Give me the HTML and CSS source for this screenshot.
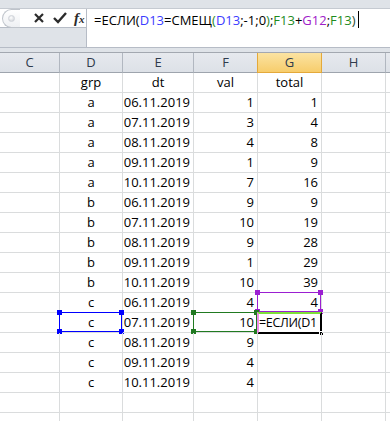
FILE: index.html
```html
<!DOCTYPE html>
<html lang="ru">
<head>
    <meta charset="UTF-8">
    <meta name="viewport" content="width=device-width, initial-scale=1.0">
    <title>Книга1 - Excel</title>
    <link rel="stylesheet" href="styles.css">
</head>
<body>
    <div class="window">
        <div class="top-strip"></div>

        <!-- Formula bar -->
        <div class="formula-bar">
            <div class="fx-panel">
                <div class="fx-tools">
                    <span class="grip"><span class="grip-dot"></span></span>
                    <svg class="tool-icon" width="14" height="14" viewBox="0 0 14 14">
                        <path d="M3 3 L11 11 M11 3 L3 11" stroke="#2b2b2b" stroke-width="2.2" fill="none"/>
                    </svg>
                    <svg class="tool-icon" width="16" height="14" viewBox="0 0 16 14">
                        <path d="M2 7 L6 11 L14 2" stroke="#2b2b2b" stroke-width="2.4" fill="none"/>
                    </svg>
                    <span class="fx-label">f<span class="fx-x">x</span></span>
                </div>
                <div class="fx-below"></div>
            </div>
            <div class="formula-input">
                <span>=ЕСЛИ(</span><span class="c-blue">D13</span><span>=СМЕЩ</span><span class="c-paren">(</span><span class="c-blue">D13</span><span>;-1;0</span><span class="c-paren">)</span><span>;</span><span class="c-green">F13</span><span>+</span><span class="c-purple">G12</span><span>;</span><span class="c-green">F13</span><span class="c-last">)</span><span class="caret"></span>
            </div>
        </div>

        <!-- Sheet -->
        <div class="sheet">
            <div class="row head-row">
                <div class="cell head">C</div>
                <div class="cell head">D</div>
                <div class="cell head">E</div>
                <div class="cell head">F</div>
                <div class="cell head head-active">G</div>
                <div class="cell head">H</div>
                <div class="cell head"></div>
            </div>

            <div class="row">
                <div class="cell"></div>
                <div class="cell center">grp</div>
                <div class="cell center">dt</div>
                <div class="cell center">val</div>
                <div class="cell center">total</div>
                <div class="cell"></div>
                <div class="cell"></div>
            </div>

            <div class="row"><div class="cell"></div><div class="cell center">a</div><div class="cell num">06.11.2019</div><div class="cell num">1</div><div class="cell num">1</div><div class="cell"></div><div class="cell"></div></div>
            <div class="row"><div class="cell"></div><div class="cell center">a</div><div class="cell num">07.11.2019</div><div class="cell num">3</div><div class="cell num">4</div><div class="cell"></div><div class="cell"></div></div>
            <div class="row"><div class="cell"></div><div class="cell center">a</div><div class="cell num">08.11.2019</div><div class="cell num">4</div><div class="cell num">8</div><div class="cell"></div><div class="cell"></div></div>
            <div class="row"><div class="cell"></div><div class="cell center">a</div><div class="cell num">09.11.2019</div><div class="cell num">1</div><div class="cell num">9</div><div class="cell"></div><div class="cell"></div></div>
            <div class="row"><div class="cell"></div><div class="cell center">a</div><div class="cell num">10.11.2019</div><div class="cell num">7</div><div class="cell num">16</div><div class="cell"></div><div class="cell"></div></div>
            <div class="row"><div class="cell"></div><div class="cell center">b</div><div class="cell num">06.11.2019</div><div class="cell num">9</div><div class="cell num">9</div><div class="cell"></div><div class="cell"></div></div>
            <div class="row"><div class="cell"></div><div class="cell center">b</div><div class="cell num">07.11.2019</div><div class="cell num">10</div><div class="cell num">19</div><div class="cell"></div><div class="cell"></div></div>
            <div class="row"><div class="cell"></div><div class="cell center">b</div><div class="cell num">08.11.2019</div><div class="cell num">9</div><div class="cell num">28</div><div class="cell"></div><div class="cell"></div></div>
            <div class="row"><div class="cell"></div><div class="cell center">b</div><div class="cell num">09.11.2019</div><div class="cell num">1</div><div class="cell num">29</div><div class="cell"></div><div class="cell"></div></div>
            <div class="row"><div class="cell"></div><div class="cell center">b</div><div class="cell num">10.11.2019</div><div class="cell num">10</div><div class="cell num">39</div><div class="cell"></div><div class="cell"></div></div>
            <div class="row">
                <div class="cell"></div>
                <div class="cell center">c</div>
                <div class="cell num">06.11.2019</div>
                <div class="cell num">4</div>
                <div class="cell num">4
                    <span class="range range-purple"><i class="h tl"></i><i class="h tr"></i><i class="h bl"></i><i class="h br"></i></span>
                </div>
                <div class="cell"></div>
                <div class="cell"></div>
            </div>
            <div class="row">
                <div class="cell"></div>
                <div class="cell center">c
                    <span class="range range-blue"><i class="h tl"></i><i class="h tr"></i><i class="h bl"></i><i class="h br"></i></span>
                </div>
                <div class="cell num">07.11.2019</div>
                <div class="cell num">10
                    <span class="range range-green"><i class="h tl"></i><i class="h tr"></i><i class="h bl"></i><i class="h br"></i></span>
                </div>
                <div class="cell editing">
                    <span class="edit-text">=ЕСЛИ(D1</span>
                    <span class="active-box"><i class="fill-handle"></i></span>
                </div>
                <div class="cell"></div>
                <div class="cell"></div>
            </div>
            <div class="row"><div class="cell"></div><div class="cell center">c</div><div class="cell num">08.11.2019</div><div class="cell num">9</div><div class="cell"></div><div class="cell"></div><div class="cell"></div></div>
            <div class="row"><div class="cell"></div><div class="cell center">c</div><div class="cell num">09.11.2019</div><div class="cell num">4</div><div class="cell"></div><div class="cell"></div><div class="cell"></div></div>
            <div class="row"><div class="cell"></div><div class="cell center">c</div><div class="cell num">10.11.2019</div><div class="cell num">4</div><div class="cell"></div><div class="cell"></div><div class="cell"></div></div>
            <div class="row"><div class="cell"></div><div class="cell"></div><div class="cell"></div><div class="cell"></div><div class="cell"></div><div class="cell"></div><div class="cell"></div></div>
            <div class="row"><div class="cell"></div><div class="cell"></div><div class="cell"></div><div class="cell"></div><div class="cell"></div><div class="cell"></div><div class="cell"></div></div>
        </div>
    </div>
</body>
</html>
```

FILE: styles.css
```css
/* Reset */
*
{
    margin: 0;
    padding: 0;
    box-sizing: border-box;
}

body
{
    width: 390px;
    height: 421px;
    overflow: hidden;
    background-color: #ffffff;
    font-family: "Open Sans", "Noto Sans", Arial, sans-serif;
    color: #000;
}

.window
{
    display: flex;
    flex-direction: column;
    height: 421px;
    background-color: #dfe3e8;
}

.top-strip
{
    height: 9px;
    background-color: #dfe3e8;
    border-bottom: 1px solid #c5cad1;
}

/* Formula bar */
.formula-bar
{
    display: flex;
    height: 39px;
    border-bottom: 1px solid #b6bcc6;
}

.fx-panel
{
    width: 86px;
    display: flex;
    flex-direction: column;
}

.fx-tools
{
    height: 19px;
    display: flex;
    align-items: center;
    gap: 6px;
    background-color: #ffffff;
    border-bottom: 1px solid #b6bcc6;
}

.grip
{
    width: 18px;
    height: 19px;
    border: 1px solid #bfc4cb;
    border-right: none;
    border-radius: 10px 0 0 10px;
    background: linear-gradient(#ffffff, #eef0f3);
    display: flex;
    align-items: center;
    justify-content: center;
    margin-left: 2px;
    margin-right: 6px;
}

.grip-dot
{
    width: 7px;
    height: 7px;
    border-radius: 50%;
    background: radial-gradient(circle at 40% 35%, #ffffff, #c8ccd2);
    border: 1px solid #d0d4da;
}

.tool-icon
{
    flex: none;
}

.fx-label
{
    font-family: "Liberation Serif", "DejaVu Serif", serif;
    font-style: italic;
    font-weight: bold;
    font-size: 15px;
    color: #2b2b2b;
    line-height: 1;
}

.fx-x
{
    font-size: 11px;
}

.fx-below
{
    flex: 1;
    background-color: #dfe3e8;
}

.formula-input
{
    flex: 1;
    background-color: #ffffff;
    border-left: 1px solid #b6bcc6;
    padding: 2px 0 0 7px;
    font-size: 13px;
    line-height: 18px;
    white-space: nowrap;
    display: flex;
    align-items: flex-start;
}

.c-blue { color: #3c3cff; }
.c-green { color: #1e8b1e; }
.c-purple { color: #a020c8; }
.c-paren { color: #2a8a2a; }
.c-last { color: #2a4a2a; }

.caret
{
    width: 1px;
    height: 17px;
    background-color: #000;
    margin-left: 2px;
}

/* Sheet grid */
.sheet
{
    margin-top: 4px;
    background-color: #ffffff;
    flex: 1;
    border-top: 1px solid #a3a8b0;
    overflow: hidden;
}

.row
{
    display: grid;
    grid-template-columns: 60px 63px 71px 64px 64px 64px 64px;
    height: 20px;
}

.cell
{
    position: relative;
    border-right: 1px solid #dadcdd;
    border-bottom: 1px solid #dadcdd;
    font-size: 13px;
    line-height: 1;
    padding: 0 3px 3px 3px;
    display: flex;
    align-items: flex-end;
    white-space: nowrap;
}

.center
{
    justify-content: center;
}

.num
{
    justify-content: flex-end;
}

/* Column headers */
.head-row .cell
{
    background: linear-gradient(#e6e9ee, #dde1e7);
    border-right: 1px solid #b1b7c0;
    border-bottom: 1px solid #9ea4ad;
    color: #2f3b4c;
    justify-content: center;
    align-items: center;
    padding: 0;
    font-size: 13px;
}

.head-row .head-active
{
    background: linear-gradient(#fbe3a2, #f7cd6c);
    border-right: 1px solid #e4a93a;
    border-bottom: 1px solid #e4a93a;
    border-left: 1px solid #e4a93a;
    margin-left: -1px;
}

/* Range finder highlights */
.range
{
    position: absolute;
    left: -1px;
    top: -1px;
    right: 0;
    bottom: 0;
    border: 1px solid;
}

.range-blue { border-color: #0000ff; color: #0000ff; }
.range-green { border-color: #217a21; color: #217a21; }
.range-purple { border-color: #9b1fd1; color: #9b1fd1; }

.h
{
    position: absolute;
    width: 5px;
    height: 5px;
    background-color: currentColor;
}

.tl { left: -3px; top: -3px; }
.tr { right: -3px; top: -3px; }
.bl { left: -3px; bottom: -3px; }
.br { right: -3px; bottom: -3px; }

/* Cell being edited */
.editing
{
    overflow: visible;
    padding-left: 1px;
    padding-right: 0;
    justify-content: flex-start;
}

.edit-text
{
    font-size: 12.5px;
    letter-spacing: -0.3px;
}

.active-box
{
    position: absolute;
    left: -1px;
    top: -1px;
    right: -1px;
    bottom: -2px;
    border: 2px solid #000;
    border-top-color: #7ee03a;
    border-left: 2px solid #ee8ae8;
}

.fill-handle
{
    position: absolute;
    right: -4px;
    bottom: -4px;
    width: 5px;
    height: 5px;
    background-color: #000;
    border: 1px solid #fff;
}
```
